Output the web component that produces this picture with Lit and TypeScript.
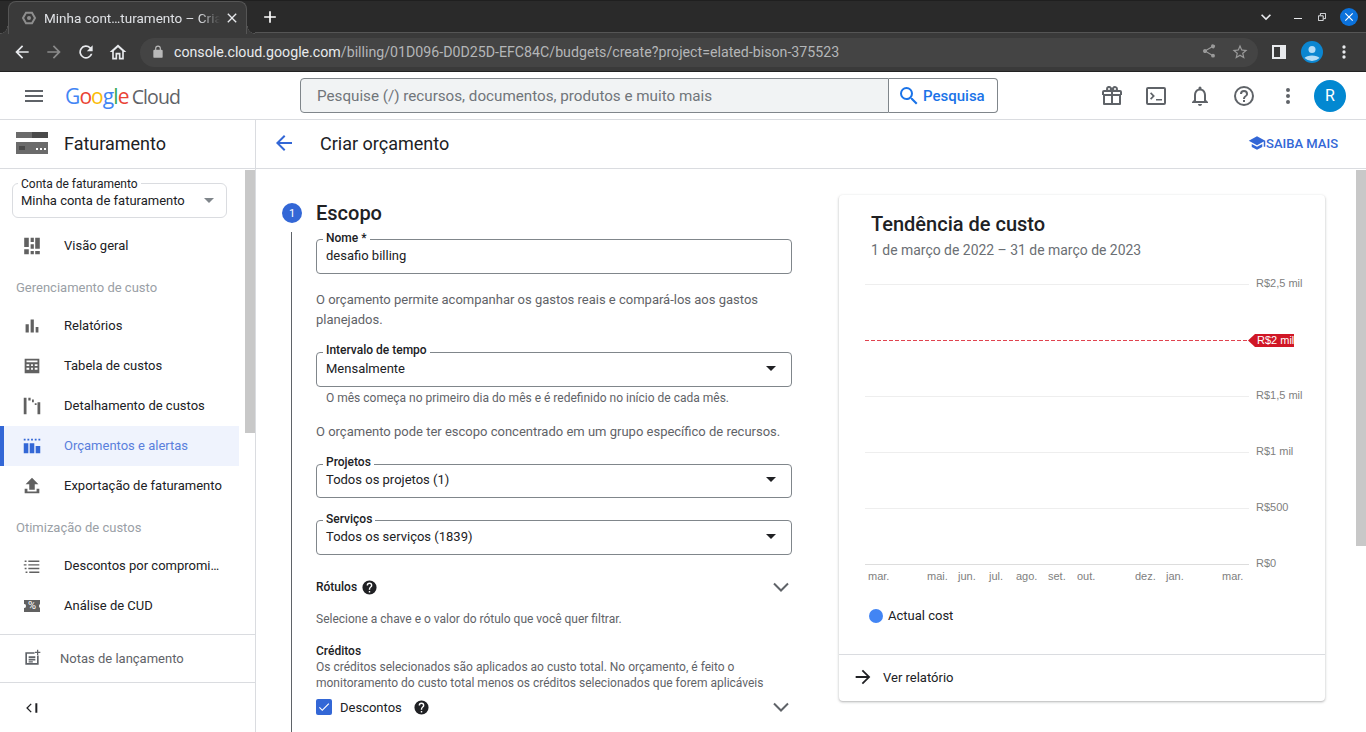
import { LitElement, html, css, svg } from 'lit';
import { customElement } from 'lit/decorators.js';

const icon = (d: string, size = 24, fill = 'currentColor') => html`<svg width=${size} height=${size} viewBox="0 0 24 24" fill=${fill}><path d=${d}></path></svg>`;

const chevron = html`<svg width="16" height="10" viewBox="0 0 16 10" fill="none" stroke="currentColor" stroke-width="2"><path d="M1 1.500l7 7 7-7"></path></svg>`;

const ICONS: Record<string, string> = {
  overview: 'M3.500 3h5v10h-5zM3.500 15.500h5V21h-5zM10.500 3h3.500v4.500h-3.500zM10.500 10h3.500v5h-3.500zM10.500 17.500h3.500V21h-3.500zM15.500 3h5v12h-5zM15.500 17.500h5V21h-5z',
  reports: 'M5 10h3.500v9H5zM10.500 5h3.500v14h-3.500zM16 13h3v6h-3z',
  table: 'M4 4h16v16H4zm2 2v2h12V6zm0 4v2h3v-2zm5 0v2h2v-2zm4 0v2h3v-2zm-9 4v2h3v-2zm5 0v2h2v-2zm4 0v2h3v-2z',
  breakdown: 'M3 3h3v18H3zM8 3h2.500v3H8zM12 5h2v3h-2zM18 8h3v13h-3zM15 9h2v2h-2z',
  budgets: 'M3 4h2v2H3zM7 4h2v2H7zM11 4h2v2h-2zM15 4h2v2h-2zM19 4h2v2h-2zM3 9h5v11H3zM9.500 9h5v11h-5zM16 12h5v8h-5z',
  exportIcon: 'M9 16h6v-6h4l-7-7-7 7h4zM7 15v3h10v-3h3v5H4v-5z',
  commit: 'M4 6h2v1.500H4zM8 6h12v1.500H8zM3 10h3v1.500H3zM8 10h12v1.500H8zM4 14h2v1.500H4zM8 14h12v1.500H8zM5 18h2v1.500H5zM9 18h11v1.500H9z',
  notes: 'M5 5h10v2H6v11h12V9h2v11H4V5zM8 10h8v2H8zm0 3h8v2H8zm0 3h5v1.500H8zM18 2h1.500v2.500H22V6h-2.500v2.500H18V6h-2.500V4.500H18z',
  help: 'M12 2a10 10 0 1 0 0 20 10 10 0 0 0 0-20zm1 17h-2v-2h2zm2.070-7.750-.9.920C13.450 12.900 13 13.500 13 15h-2v-.5c0-1.100.450-2.100 1.170-2.830l1.240-1.260c.370-.360.590-.860.590-1.410a2 2 0 0 0-4 0H8a4 4 0 0 1 8 0c0 .880-.360 1.680-.930 2.250z',
  helpOutline: 'M11 18h2v-2h-2zm1-16a10 10 0 1 0 0 20 10 10 0 0 0 0-20zm0 18a8 8 0 1 1 0-16 8 8 0 0 1 0 16zm0-14a4 4 0 0 0-4 4h2a2 2 0 0 1 4 0c0 2-3 1.750-3 5h2c0-2.250 3-2.500 3-5a4 4 0 0 0-4-4z',
  gift: 'M20 6h-2.180c.110-.310.180-.650.180-1a3 3 0 0 0-5.500-1.650L12 4l-.5-.670A3 3 0 0 0 6 5c0 .350.070.690.180 1H4a2 2 0 0 0-2 2v3h1v9a1 1 0 0 0 1 1h16a1 1 0 0 0 1-1v-9h1V8a2 2 0 0 0-2-2zm-5-2a1 1 0 1 1 0 2 1 1 0 0 1 0-2zM9 4a1 1 0 1 1 0 2 1 1 0 0 1 0-2zM4 8h7v2H4zm1 4h6v7H5zm8 7v-7h6v7zm7-9h-7V8h7z',
  terminal: 'M20 3H4a2 2 0 0 0-2 2v14a2 2 0 0 0 2 2h16a2 2 0 0 0 2-2V5a2 2 0 0 0-2-2zm0 16H4V5h16zM6 9.500l1.200-1.200 3.700 3.700-3.700 3.700L6 14.500 8.500 12zM12 15h6v1.500h-6z',
  bell: 'M12 22c1.100 0 2-.900 2-2h-4c0 1.100.900 2 2 2zm6-6v-5c0-3.070-1.630-5.640-4.500-6.320V4a1.500 1.500 0 0 0-3 0v.680C7.640 5.360 6 7.920 6 11v5l-2 2v1h16v-1zm-2 1H8v-6c0-2.480 1.510-4.500 4-4.500s4 2.020 4 4.500z',
  dots: 'M12 8a2 2 0 1 0 0-4 2 2 0 0 0 0 4zm0 2a2 2 0 1 0 0 4 2 2 0 0 0 0-4zm0 6a2 2 0 1 0 0 4 2 2 0 0 0 0-4z',
  search: 'M15.500 14h-.790l-.280-.270A6.470 6.470 0 0 0 16 9.500 6.500 6.500 0 1 0 9.500 16c1.610 0 3.090-.590 4.230-1.570l.270.280v.790l5 5 1.490-1.490zm-6 0a4.500 4.500 0 1 1 0-9 4.500 4.500 0 0 1 0 9z',
  back: 'M20 11H7.830l5.590-5.590L12 4l-8 8 8 8 1.410-1.410L7.830 13H20z',
  forward: 'M12 4l-1.410 1.410L16.170 11H4v2h12.170l-5.580 5.590L12 20l8-8z',
  reload: 'M17.650 6.350A8 8 0 1 0 19.730 14h-2.080a6 6 0 1 1-1.410-6.240L13 11h7V4z',
  home: 'M12 3 2 12h3v9h6v-6h2v6h6v-9h3zm5 16h-2v-6H9v6H7v-8.200l5-4.500 5 4.500z',
  lock: 'M18 8h-1V6A5 5 0 0 0 7 6v2H6a2 2 0 0 0-2 2v10a2 2 0 0 0 2 2h12a2 2 0 0 0 2-2V10a2 2 0 0 0-2-2zM9 6a3 3 0 0 1 6 0v2H9z',
  share: 'M18 16.080c-.760 0-1.440.300-1.960.770L8.910 12.700c.050-.230.090-.460.090-.700s-.040-.470-.090-.700l7.050-4.110A3 3 0 1 0 15 5c0 .240.040.470.090.700L8.040 9.810a3 3 0 1 0 0 4.380l7.120 4.160c-.050.210-.080.430-.080.650a2.920 2.920 0 1 0 2.920-2.920z',
  star: 'M22 9.240l-7.190-.620L12 2 9.190 8.630 2 9.240l5.460 4.730L5.820 21 12 17.270 18.180 21l-1.630-7.030zM12 15.400l-3.760 2.270 1-4.280-3.320-2.880 4.380-.380L12 6.100l1.710 4.040 4.380.380-3.320 2.880 1 4.280z',
  hat: 'M5 13.180v4L12 21l7-3.820v-4L12 17zM12 3 1 9l11 6 9-4.910V17h2V9z',
  check: 'M9 16.170 4.830 12l-1.420 1.410L9 19 21 7l-1.410-1.410z',
  chevron: 'M7.410 8.590 12 13.170l4.590-4.580L18 10l-6 6-6-6z',
  collapse: 'M11.500 6.500 10.100 5.100 3.200 12l6.900 6.900 1.400-1.400L6 12zM17 5h3v14h-3z',
  close: 'M19 6.410 17.590 5 12 10.590 6.410 5 5 6.410 10.590 12 5 17.590 6.410 19 12 13.410 17.590 19 19 17.590 13.410 12z',
};

const navTop = [{ icon: 'overview', label: 'Visão geral' }];
const navCost = [
  { icon: 'reports', label: 'Relatórios' },
  { icon: 'table', label: 'Tabela de custos' },
  { icon: 'breakdown', label: 'Detalhamento de custos' },
  { icon: 'budgets', label: 'Orçamentos e alertas', active: true },
  { icon: 'exportIcon', label: 'Exportação de faturamento' },
];
const navOpt = [{ icon: 'commit', label: 'Descontos por compromi…' }];

const GRID = [
  { y: 14, label: 'R$2,5 mil' },
  { y: 126, label: 'R$1,5 mil' },
  { y: 182, label: 'R$1 mil' },
  { y: 238, label: 'R$500' },
];
const MONTHS: [number, string][] = [
  [29, 'mar.'], [88, 'mai.'], [119, 'jun.'], [150, 'jul.'], [177, 'ago.'],
  [209, 'set.'], [238, 'out.'], [296, 'dez.'], [327, 'jan.'], [383, 'mar.'],
];

@customElement('app-root')
export class AppRoot extends LitElement {
  static styles = css`
    :host {
      display: block;
      height: 732px;
      overflow: hidden;
      font-family: Roboto, 'Liberation Sans', sans-serif;
      font-size: 13px;
      color: #202124;
      background: #fff;
    }
    svg { display: block; flex: none; }

    /* browser chrome */
    .strip {
      height: 33px;
      background: #2a2a2a;
      border-top: 1px solid #1f1f1f;
      border-bottom: 1px solid #555;
      box-sizing: border-box;
      display: flex;
      align-items: stretch;
      color: #e8eaed;
    }
    .tab {
      position: relative;
      width: 239px;
      height: 33px;
      margin-left: 8px;
      background: #3a3a3a;
      border-radius: 8px 8px 0 0;
      border: 1px solid #555;
      border-bottom: none;
      box-sizing: border-box;
      display: flex;
      align-items: center;
      padding-left: 12px;
      flex: none;
    }
    .tab::before,
    .tab::after {
      content: '';
      position: absolute;
      bottom: 0;
      width: 8px;
      height: 8px;
    }
    .tab::before { left: -9px; background: radial-gradient(circle at 0 0, #2a2a2a 7px, #555 7.500px, #3a3a3a 8px); }
    .tab::after { right: -9px; background: radial-gradient(circle at 100% 0, #2a2a2a 7px, #555 7.500px, #3a3a3a 8px); }
    .tab-title {
      margin-left: 7px;
      width: 176px;
      font-size: 13.500px;
      white-space: nowrap;
      color: #dfe1e5;
      -webkit-mask-image: linear-gradient(90deg, #000 88%, transparent 100%);
    }
    .tab-close { margin-left: 4px; color: #e8eaed; }
    .new-tab { margin-left: 13px; align-self: center; color: #fff; }
    .win { margin-left: auto; display: flex; align-items: center; padding-right: 8px; color: #e8eaed; }
    .win-chev { margin-right: 6px; }
    .win-min { width: 8px; height: 1px; background: #e8eaed; margin: 4px 11px 0 12px; }
    .win-rest { margin: 0 14px 0 5px; }
    .win-close {
      width: 18px;
      height: 18px;
      border-radius: 50%;
      background: #0b72dc;
      color: #fff;
      display: flex;
      align-items: center;
      justify-content: center;
    }

    .toolbar {
      height: 39px;
      background: #3a3a3a;
      border-bottom: 1px solid #222;
      box-sizing: border-box;
      display: flex;
      align-items: center;
      color: #e8eaed;
    }
    .tb-btn { width: 32px; display: flex; justify-content: center; flex: none; }
    .tb-btn.first { margin-left: 6px; }
    .tb-btn.off { color: #8a8a8a; }
    .omni {
      margin-left: 6px;
      width: 1118px;
      height: 29px;
      flex: none;
      box-sizing: border-box;
      background: #444;
      border-radius: 15px;
      display: flex;
      align-items: center;
      padding-left: 11px;
      color: #b9b9b9;
    }
    .url { margin-left: 9px; font-size: 14.190px; color: #b4b6b8; white-space: nowrap; }
    .url b { font-weight: 400; color: #e8eaed; }
    .omni-end { margin-left: auto; display: flex; gap: 14px; padding-right: 9px; color: #9a9a9a; }
    .tb-panel { margin-left: 14px; }
    .tb-avatar { width: 22px; height: 22px; margin: 0 11px 0 15px; }

    /* console header */
    .appbar {
      height: 48px;
      box-sizing: border-box;
      border-bottom: 1px solid #dadce0;
      display: flex;
      align-items: center;
      color: #5f6368;
    }
    .burger { margin-left: 22px; color: #5f6368; }
    .logo { margin-left: 19px; width: 210px; font-family: 'Open Sans', sans-serif; font-size: 21px; letter-spacing: -0.9px; white-space: nowrap; }
    .logo .b { color: #4285f4; }
    .logo .r { color: #ea4335; }
    .logo .y { color: #fbbc05; }
    .logo .g { color: #34a853; }
    .logo .c { color: #5f6368; margin-left: 3px; font-size: 19.500px; }
    .search { display: flex; height: 35px; margin-left: 25px; }
    .search-input {
      width: 589px;
      box-sizing: border-box;
      background: #f1f3f4;
      border: 1px solid #80868b;
      border-radius: 4px 0 0 4px;
      padding-left: 16px;
      display: flex;
      align-items: center;
      font-size: 15.200px;
      color: #70757a;
    }
    .search-btn {
      width: 109px;
      box-sizing: border-box;
      border: 1px solid #80868b;
      border-left: none;
      border-radius: 0 4px 4px 0;
      display: flex;
      align-items: center;
      padding-left: 8px;
      gap: 2px;
      color: #1a73e8;
      font-size: 15px;
      font-weight: 500;
    }
    .app-icons { margin-left: 102px; display: flex; gap: 20px; }
    .avatar {
      margin-left: 14px;
      width: 32px;
      height: 32px;
      border-radius: 50%;
      background: #0288d1;
      color: #fff;
      font-size: 16px;
      display: flex;
      align-items: center;
      justify-content: center;
    }

    .body { display: flex; height: 612px; }

    /* left nav */
    .side {
      width: 256px;
      flex: none;
      box-sizing: border-box;
      border-right: 1px solid #dadce0;
      display: flex;
      flex-direction: column;
    }
    .side-head {
      height: 49px;
      flex: none;
      box-sizing: border-box;
      border-bottom: 1px solid #dadce0;
      display: flex;
      align-items: center;
      padding: 0 0 2px 16px;
      gap: 16px;
      font-size: 18px;
    }
    .side-mid { flex: 1; display: flex; min-height: 0; }
    .side-list { width: 245px; flex: none; padding-top: 14px; box-sizing: border-box; }
    .account {
      position: relative;
      margin: 0 18px 8px 12px;
      height: 35px;
      box-sizing: border-box;
      border: 1px solid #dadce0;
      border-radius: 6px;
      padding: 0 8px;
      display: flex;
      align-items: center;
      justify-content: space-between;
    }
    .float-label {
      position: absolute;
      left: 5px;
      top: -7px;
      background: #fff;
      padding: 0 3px;
      font-size: 12px;
      line-height: 14px;
      color: #202124;
    }
    .caret-grey { width: 0; height: 0; border: 5px solid transparent; border-top-color: #80868b; border-bottom: none; margin-right: 4px; }
    .nav-row {
      height: 40px;
      display: flex;
      align-items: center;
      width: 239px;
      box-sizing: border-box;
    }
    .nav-row .ico { width: 64px; display: flex; justify-content: center; color: #616161; flex: none; }
    .nav-row .txt { white-space: nowrap; margin-bottom: 2px; }
    .nav-row.active { background: #eff3fd; color: #3367d6; border-left: 4px solid #3367d6; }
    .nav-row.active .ico { width: 60px; color: #3367d6; padding-right: 4px; box-sizing: border-box; }
    .nav-row.active .txt { color: #5a7fdc; }
    .sect { height: 40px; display: flex; align-items: center; padding: 2px 0 0 16px; box-sizing: border-box; color: #9aa0a6; }
    .cud {
      position: relative;
      width: 16px;
      height: 12px;
      background: #616161;
      color: #fff;
      font-size: 11px;
      line-height: 12px;
      text-align: center;
    }
    .cud::before,
    .cud::after {
      content: '';
      position: absolute;
      top: 4px;
      width: 3px;
      height: 4px;
      border-radius: 50%;
      background: #fff;
    }
    .cud::before { left: -1.500px; }
    .cud::after { right: -1.500px; }
    .track { width: 10px; flex: none; padding-top: 1px; }
    .thumb { background: #c8c8c8; }
    .thumb.side-thumb { height: 263px; }
    .thumb.main-thumb { height: 376px; }
    .side-foot { border-top: 1px solid #dadce0; flex: none; }
    .notes { height: 48px; display: flex; align-items: center; padding: 0 0 1px 22px; gap: 18px; box-sizing: border-box; color: #5f6368; border-bottom: 1px solid #dadce0; }
    .collapse { height: 49px; display: flex; align-items: center; padding-left: 24px; color: #202124; }

    /* main */
    .main { flex: 1; display: flex; flex-direction: column; min-width: 0; }
    .main-head {
      height: 49px;
      flex: none;
      box-sizing: border-box;
      border-bottom: 1px solid #dadce0;
      display: flex;
      align-items: center;
      padding: 0 0 2px 16px;
      font-size: 18px;
    }
    .main-head .arrow { color: #3367d6; }
    .main-head h1 { font: inherit; margin: 0 0 0 24px; }
    .learn {
      margin-left: auto;
      margin-right: 28px;
      display: flex;
      align-items: center;
      color: #3367d6;
      font-size: 13px;
      font-weight: 500;
    }
    .main-mid { flex: 1; display: flex; min-height: 0; overflow: hidden; }
    .content { flex: 1; display: flex; min-width: 0; padding: 28px 0 0 25px; box-sizing: border-box; }
    .form { width: 511px; flex: none; }
    .step-head { display: flex; align-items: center; height: 32px; }
    .step-num {
      width: 20px;
      height: 20px;
      border-radius: 50%;
      background: #3367d6;
      color: #fff;
      font-size: 11px;
      display: flex;
      align-items: center;
      justify-content: center;
      margin-left: 1px;
    }
    .step-head h2 { margin: 0 0 0 14px; font-size: 20px; font-weight: 500; color: #202124; }
    .step-body {
      margin: 3px 0 0 10px;
      border-left: 1px solid #5f6368;
      padding: 7px 0 40px 24px;
      height: 520px;
      box-sizing: border-box;
    }
    .field {
      position: relative;
      height: 35px;
      box-sizing: border-box;
      border: 1px solid #80868b;
      border-radius: 4px;
      padding: 0 9px 2px;
      display: flex;
      align-items: center;
      justify-content: space-between;
    }
    .field .float-label { font-weight: 500; top: -9px; left: 6px; }
    .f-interval { margin-top: 22px; }
    .f-interval .float-label,
    .f-projects .float-label { top: -10px; }
    .f-projects { margin-top: 22px; height: 34px; padding-bottom: 3px; }
    .f-services { margin-top: 22px; }
    .caret { width: 0; height: 0; border: 5px solid transparent; border-top-color: #202124; border-bottom: none; margin-right: 6px; }
    .para { margin: 16px 0 0; line-height: 20px; color: #5f6368; }
    .para.scope { margin-top: 17px; }
    .hint { margin: 4px 0 0 10px; font-size: 12px; line-height: 14px; color: #5f6368; }
    .line-row { display: flex; align-items: center; height: 24px; }
    .line-row.labels { margin-top: 20px; }
    .line-row.discounts { margin-top: 4px; }
    .strong { font-size: 12px; font-weight: 500; }
    .line-row .help-a { margin-left: 4px; color: #202124; }
    .line-row .help-b { margin-left: 11px; color: #202124; }
    .line-row .chev { margin: 0 3px 0 auto; color: #5f6368; }
    .small { font-size: 12px; color: #5f6368; }
    .filter-hint { margin-top: 13px; line-height: 14px; }
    .credits { margin-top: 18px; line-height: 14px; }
    .credits-text { margin-top: 1px; line-height: 16px; }
    .check-box {
      width: 16px;
      height: 16px;
      border-radius: 2px;
      background: #3367d6;
      color: #fff;
      display: flex;
      align-items: center;
      justify-content: center;
      margin-right: 8px;
    }

    /* chart card */
    .card {
      width: 486px;
      height: 506px;
      margin: -2px 0 0 47px;
      flex: none;
      box-sizing: border-box;
      border-radius: 4px;
      box-shadow: 0 1px 2px rgba(60, 64, 67, 0.3), 0 1px 3px 1px rgba(60, 64, 67, 0.08);
      display: flex;
      flex-direction: column;
    }
    .card-top { flex: 1; padding: 17px 0 0 32px; position: relative; }
    .card h3 { margin: 0; font-size: 20px; font-weight: 500; line-height: 24px; }
    .card-sub { margin-top: 4px; font-size: 13.950px; line-height: 20px; color: #6b6f74; }
    .chart { margin: 10px 0 0 -32px; }
    .legend { display: flex; align-items: center; gap: 5px; margin: 26px 0 0 -2px; }
    .dot { width: 14px; height: 14px; border-radius: 50%; background: #4285f4; }
    .card-foot {
      height: 47px;
      flex: none;
      box-sizing: border-box;
      border-top: 1px solid #dadce0;
      display: flex;
      align-items: center;
      padding: 0 0 2px 13px;
      gap: 9px;
    }
  `;

  private navRow(item: { icon: string; label: string; active?: boolean }) {
    return html`<div class="nav-row ${item.active ? 'active' : ''}">
      <span class="ico">${icon(ICONS[item.icon], 22)}</span>
      <span class="txt">${item.label}</span>
    </div>`;
  }

  private chart() {
    return html`<svg class="chart" width="486" height="312" viewBox="0 0 486 312">
      ${GRID.map(
        (g) => svg`<line x1="26" x2="410" y1=${g.y + 0.5} y2=${g.y + 0.5} stroke="#eeeeee"></line>
          <text x="417" y=${g.y + 3} font-family="Liberation Sans" font-size="11" fill="#808080">${g.label}</text>`,
      )}
      <line x1="26" x2="410" y1="294.500" y2="294.500" stroke="#dddddd"></line>
      <text x="417" y="297" font-family="Liberation Sans" font-size="11" fill="#808080">R$0</text>
      <line x1="26" x2="410" y1="70.500" y2="70.500" stroke="#e0434f" stroke-dasharray="4 2"></line>
      <path d="M409 70.500l7-6.500h39v13h-39z" fill="#d01726"></path>
      <text x="418" y="74" font-family="Liberation Sans" font-size="11" fill="#fff">R$2 mil</text>
      ${MONTHS.map(
        ([x, m]) => svg`<text x=${x} y="310" font-family="Liberation Sans" font-size="11" fill="#808080">${m}</text>`,
      )}
    </svg>`;
  }

  render() {
    return html`
      <div class="strip">
        <div class="tab">
          <svg width="16" height="16" viewBox="0 0 24 24" fill="none" stroke="#8e8e8e" stroke-width="3"><path d="M7.500 4h9l4.500 8-4.500 8h-9L3 12z"></path><circle cx="12" cy="12" r="3" fill="#8e8e8e" stroke="none"></circle></svg>
          <span class="tab-title">Minha cont…turamento – Cria</span>
          <span class="tab-close">${icon(ICONS.close, 16)}</span>
        </div>
        <span class="new-tab">${icon('M19 13h-6v6h-2v-6H5v-2h6V5h2v6h6z', 20)}</span>
        <div class="win">
          <span class="win-chev">${icon(ICONS.chevron, 20)}</span>
          <span class="win-min"></span>
          <svg class="win-rest" width="8" height="8" viewBox="0 0 10 10" fill="none" stroke="#e8eaed" stroke-width="1.200"><path d="M.5 3.500h6v6h-6zM3 3V.5h6.500V7H7"></path></svg>
          <span class="win-close">${icon(ICONS.close, 14)}</span>
        </div>
      </div>
      <div class="toolbar">
        <span class="tb-btn first">${icon(ICONS.back, 20)}</span>
        <span class="tb-btn off">${icon(ICONS.forward, 20)}</span>
        <span class="tb-btn">${icon(ICONS.reload, 20)}</span>
        <span class="tb-btn">${icon(ICONS.home, 20)}</span>
        <div class="omni">
          ${icon(ICONS.lock, 14)}
          <span class="url"><b>console.cloud.google.com</b>/billing/01D096-D0D25D-EFC84C/budgets/create?project=elated-bison-375523</span>
          <span class="omni-end">${icon(ICONS.share, 16)}${icon(ICONS.star, 18)}</span>
        </div>
        <svg class="tb-panel" width="14" height="14" viewBox="0 0 14 14"><path d="M0 0h14v14H0z" fill="#e8eaed"></path><path d="M2 2h6v10H2z" fill="#3a3a3a"></path></svg>
        <svg class="tb-avatar" viewBox="0 0 22 22"><circle cx="11" cy="11" r="11" fill="#0b86d1"></circle><circle cx="11" cy="8.500" r="3.500" fill="#b5dcf5"></circle><path d="M3.500 17c2-3.500 13-3.500 15 0a11 11 0 0 1-15 0z" fill="#b5dcf5"></path></svg>
        <span>${icon(ICONS.dots, 20)}</span>
      </div>

      <div class="appbar">
        <span class="burger">${icon('M3 18h18v-2H3zm0-5h18v-2H3zm0-7v2h18V6z', 24)}</span>
        <span class="logo"><span class="b">G</span><span class="r">o</span><span class="y">o</span><span class="b">g</span><span class="g">l</span><span class="r">e</span><span class="c">Cloud</span></span>
        <div class="search">
          <div class="search-input">Pesquise (/) recursos, documentos, produtos e muito mais</div>
          <div class="search-btn">${icon(ICONS.search, 24)}Pesquisa</div>
        </div>
        <div class="app-icons">
          ${icon(ICONS.gift)}${icon(ICONS.terminal)}${icon(ICONS.bell)}${icon(ICONS.helpOutline)}${icon(ICONS.dots)}
        </div>
        <div class="avatar">R</div>
      </div>

      <div class="body">
        <aside class="side">
          <div class="side-head">
            <svg width="32" height="24" viewBox="0 0 32 24"><path d="M0 1h16v6H0z" fill="#6b6b6b"></path><path d="M16 1h16v6H16z" fill="#4a4a4a"></path><path d="M0 11h32v12H0z" fill="#6b6b6b"></path><path d="M3 15h6v4H3z" fill="#4a4a4a"></path><path d="M20 17h2v2h-2zM24 17h2v2h-2zM28 17h2v2h-2z" fill="#fff"></path></svg>
            Faturamento
          </div>
          <div class="side-mid">
            <div class="side-list">
              <div class="account">
                <span class="float-label">Conta de faturamento</span>
                Minha conta de faturamento
                <span class="caret-grey"></span>
              </div>
              ${navTop.map((n) => this.navRow(n))}
              <div class="sect">Gerenciamento de custo</div>
              ${navCost.map((n) => this.navRow(n))}
              <div class="sect">Otimização de custos</div>
              ${navOpt.map((n) => this.navRow(n))}
              <div class="nav-row"><span class="ico"><span class="cud">%</span></span><span class="txt">Análise de CUD</span></div>
            </div>
            <div class="track"><div class="thumb side-thumb"></div></div>
          </div>
          <div class="side-foot">
            <div class="notes">${icon(ICONS.notes, 20)}Notas de lançamento</div>
            <div class="collapse">${icon(ICONS.collapse, 16)}</div>
          </div>
        </aside>

        <main class="main">
          <div class="main-head">
            <span class="arrow">${icon(ICONS.back, 24)}</span>
            <h1>Criar orçamento</h1>
            <span class="learn">${icon(ICONS.hat, 18)}SAIBA MAIS</span>
          </div>
          <div class="main-mid">
            <div class="content">
              <div class="form">
                <div class="step-head"><span class="step-num">1</span><h2>Escopo</h2></div>
                <div class="step-body">
                  <div class="field"><span class="float-label">Nome *</span>desafio billing</div>
                  <p class="para">O orçamento permite acompanhar os gastos reais e compará-los aos gastos planejados.</p>
                  <div class="field f-interval"><span class="float-label">Intervalo de tempo</span>Mensalmente<span class="caret"></span></div>
                  <div class="hint">O mês começa no primeiro dia do mês e é redefinido no início de cada mês.</div>
                  <p class="para scope">O orçamento pode ter escopo concentrado em um grupo específico de recursos.</p>
                  <div class="field f-projects"><span class="float-label">Projetos</span>Todos os projetos (1)<span class="caret"></span></div>
                  <div class="field f-services"><span class="float-label">Serviços</span>Todos os serviços (1839)<span class="caret"></span></div>
                  <div class="line-row strong labels">Rótulos <span class="help-a">${icon(ICONS.help, 17)}</span><span class="chev">${chevron}</span></div>
                  <div class="small filter-hint">Selecione a chave e o valor do rótulo que você quer filtrar.</div>
                  <div class="strong credits">Créditos</div>
                  <div class="small credits-text">Os créditos selecionados são aplicados ao custo total. No orçamento, é feito o monitoramento do custo total menos os créditos selecionados que forem aplicáveis</div>
                  <div class="line-row discounts"><span class="check-box">${icon(ICONS.check, 14)}</span>Descontos<span class="help-b">${icon(ICONS.help, 17)}</span><span class="chev">${chevron}</span></div>
                </div>
              </div>
              <section class="card">
                <div class="card-top">
                  <h3>Tendência de custo</h3>
                  <div class="card-sub">1 de março de 2022 – 31 de março de 2023</div>
                  ${this.chart()}
                  <div class="legend"><span class="dot"></span>Actual cost</div>
                </div>
                <div class="card-foot">${icon(ICONS.forward, 22)}Ver relatório</div>
              </section>
            </div>
            <div class="track"><div class="thumb main-thumb"></div></div>
          </div>
        </main>
      </div>
    `;
  }
}
